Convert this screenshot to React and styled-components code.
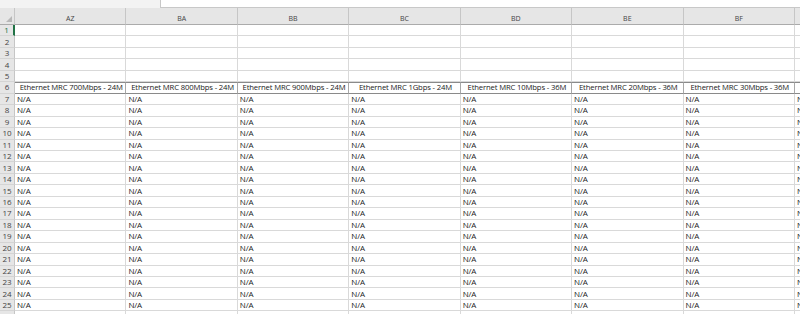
import styled, { createGlobalStyle } from "styled-components";

const Global = createGlobalStyle`
  html, body { margin: 0; padding: 0; background: #fff; }
  body { width: 800px; height: 314px; overflow: hidden; }
`;

const Page = styled.div`
  width: 800px;
  height: 314px;
  overflow: hidden;
  font-family: "Open Sans", "Liberation Sans", sans-serif;
  background: #fff;
`;

const FormulaStrip = styled.div`
  height: 8px;
  background: #f3f3f3;
  display: flex;
  padding-left: 160px;
`;

const FormulaInput = styled.div`
  flex: 1;
  background: #fff;
  border-left: 1px solid #c8c8c8;
  border-bottom: 1px solid #c8c8c8;
  box-sizing: border-box;
`;

const Sheet = styled.div`
  display: grid;
  grid-template-columns: 15px repeat(7, 111.43px) 20px;
  grid-auto-rows: 11.46px;
  grid-template-rows: 17px;
`;

const Corner = styled.div`
  background: #e6e6e6;
  border-right: 1px solid #c6c6c6;
  border-bottom: 1px solid #ababab;
  box-sizing: border-box;
  position: relative;
  &::after {
    content: "";
    position: absolute;
    right: 2px;
    bottom: 2px;
    border-left: 6px solid transparent;
    border-bottom: 6px solid #b8b8b8;
  }
`;

const ColHead = styled.div`
  background: #e6e6e6;
  border-right: 1px solid #c6c6c6;
  border-bottom: 1px solid #ababab;
  box-sizing: border-box;
  display: flex;
  align-items: flex-end;
  justify-content: center;
  padding-bottom: 2px;
  font-size: 7px;
  color: #444;
  line-height: 1;
`;

const RowHead = styled.div`
  background: #e6e6e6;
  border-right: 1px solid ${(p) => (p.$active ? "#217346" : "#c6c6c6")};
  border-bottom: 1px solid #d4d4d4;
  box-sizing: border-box;
  display: flex;
  align-items: center;
  justify-content: center;
  font-size: 8px;
  color: #444;
  line-height: 1;
  ${(p) => p.$active && "color: #217346; border-right-width: 2px;"}
`;

const Cell = styled.div`
  border-right: 1px solid ${(p) => (p.$title ? "#a8a8a8" : "#d9d9d9")};
  border-bottom: 1px solid ${(p) => (p.$title ? "#8a8a8a" : "#d9d9d9")};
  ${(p) => p.$topLine && "border-top: 1px solid #8a8a8a;"}
  box-sizing: border-box;
  display: flex;
  align-items: center;
  justify-content: ${(p) => (p.$title ? "center" : "flex-start")};
  padding-left: 2px;
  font-size: ${(p) => (p.$title ? "7.7px" : "8px")};
  letter-spacing: -0.15px;
  color: #222;
  white-space: nowrap;
  overflow: hidden;
  line-height: 1;
`;

const cols = ["AZ", "BA", "BB", "BC", "BD", "BE", "BF", ""];
const titles = [
  "Ethernet MRC 700Mbps - 24M",
  "Ethernet MRC 800Mbps - 24M",
  "Ethernet MRC 900Mbps - 24M",
  "Ethernet MRC 1Gbps - 24M",
  "Ethernet MRC 10Mbps - 36M",
  "Ethernet MRC 20Mbps - 36M",
  "Ethernet MRC 30Mbps - 36M",
  "",
];

export default function App() {
  const rows = Array.from({ length: 26 }, (_, i) => i + 1);
  return (
    <Page>
      <Global />
      <FormulaStrip>
        <FormulaInput />
      </FormulaStrip>
      <Sheet>
        <Corner />
        {cols.map((c, i) => (
          <ColHead key={i}>{c}</ColHead>
        ))}
        {rows.map((r) => (
          <Row key={r} n={r} />
        ))}
      </Sheet>
    </Page>
  );
}

function Row({ n }) {
  return (
    <>
      <RowHead $active={n === 1}>{n}</RowHead>
      {cols.map((_, i) => {
        if (n === 6) {
          return (
            <Cell key={i} $title $topLine>
              {titles[i]}
            </Cell>
          );
        }
        return <Cell key={i}>{n > 6 && n < 26 ? (i === 7 ? "N" : "N/A") : ""}</Cell>;
      })}
    </>
  );
}
